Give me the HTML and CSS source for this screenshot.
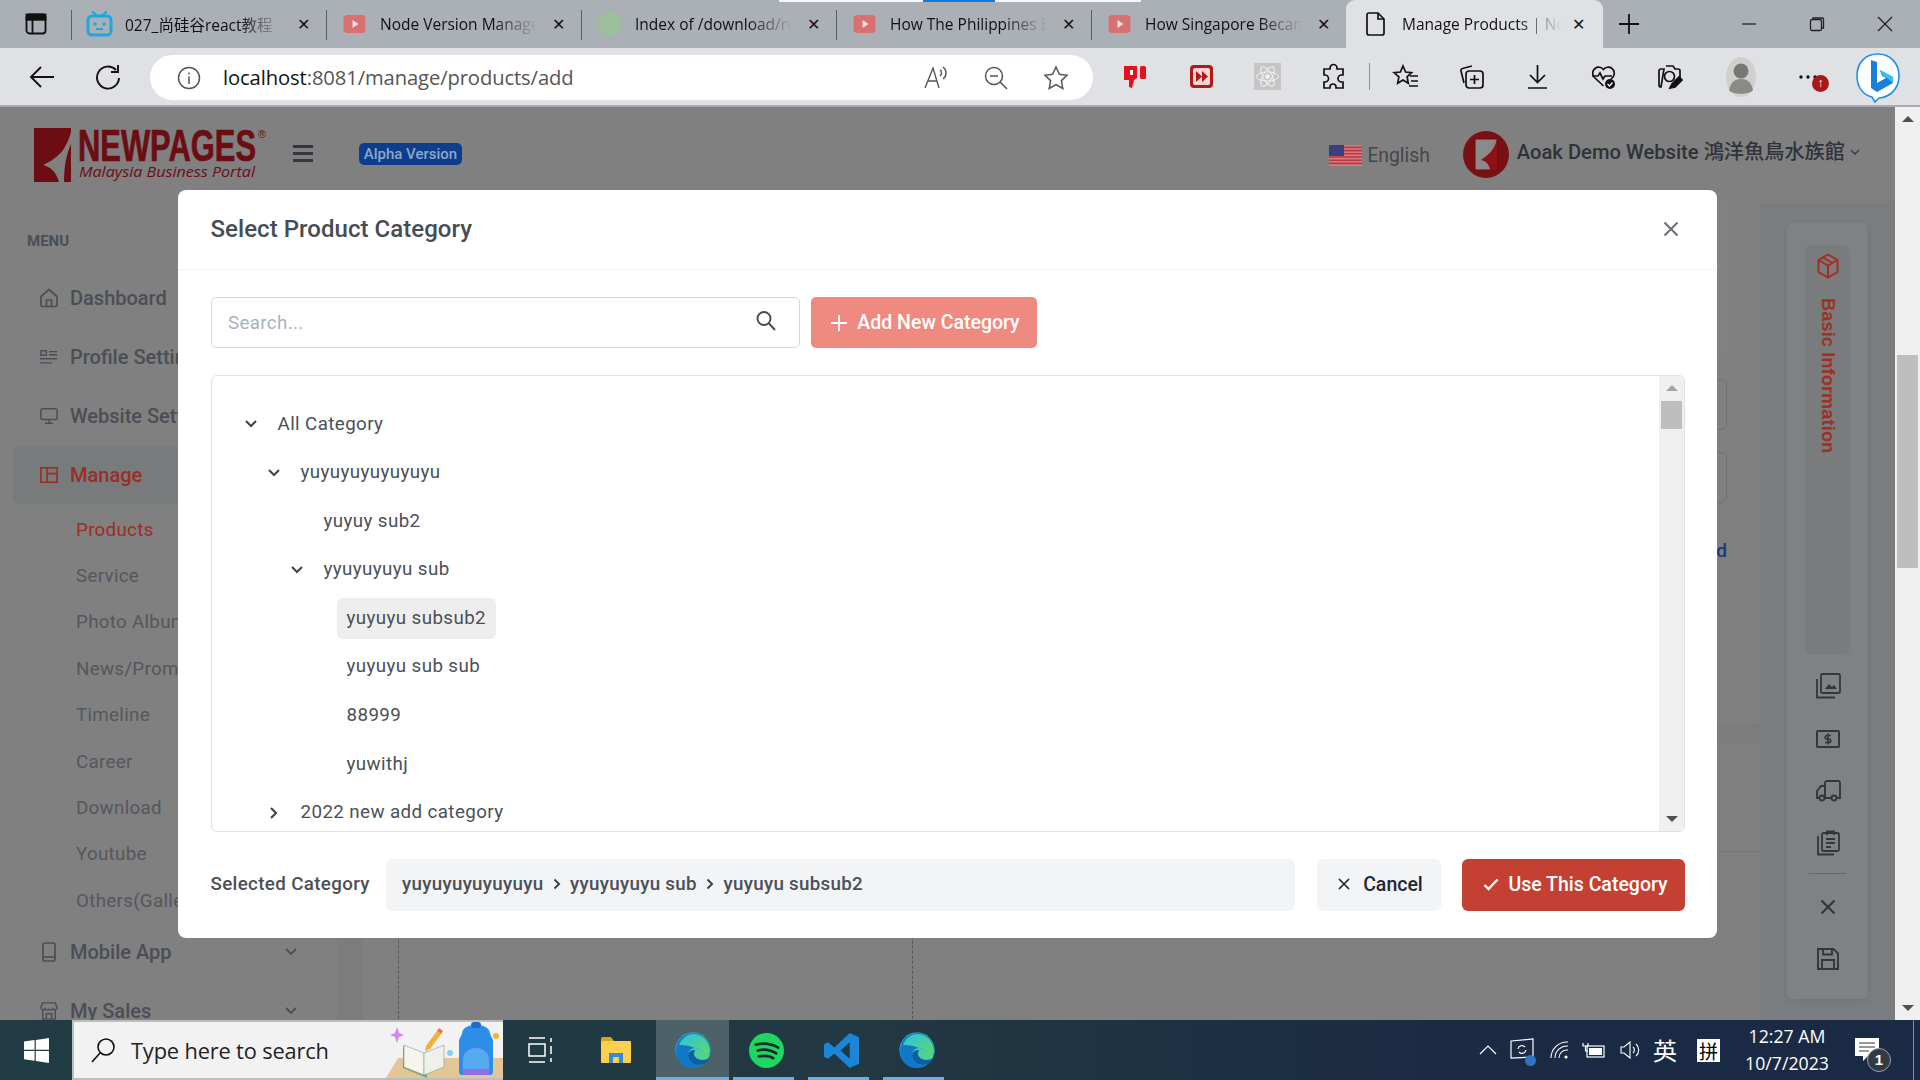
FILE: index.html
```html
<!DOCTYPE html>
<html lang="en">
<head>
<meta charset="utf-8">
<title>Manage Products</title>
<link rel="stylesheet" href="styles.css">
</head>
<body>
<div class="loadbar"><span class="lb-w1"></span><span class="lb-b"></span><span class="lb-w2"></span></div>

<header class="tabstrip">
  <div class="tabs-btn">
    <svg width="24" height="24" viewBox="0 0 24 24" fill="none" stroke="#111" stroke-width="1.8"><rect x="2.5" y="2.5" width="19" height="19" rx="3"/><path d="M2.5 7.5h19M8.5 7.5v14" /><rect x="2.5" y="2.5" width="19" height="5" fill="#111"/></svg>
  </div>
  <div class="tab">
    <svg class="fav" width="27" height="26" viewBox="0 0 27 26"><path d="M7 1l4 4M20 1l-4 4" stroke="#1fa8de" stroke-width="2.4" stroke-linecap="round"/><rect x="2" y="5" width="23" height="19" rx="4" fill="none" stroke="#1fa8de" stroke-width="3"/><circle cx="9" cy="13" r="1.8" fill="#1fa8de"/><circle cx="18" cy="13" r="1.8" fill="#1fa8de"/><path d="M10 18h7" stroke="#1fa8de" stroke-width="2"/></svg>
    <span class="tab-title">027_尚硅谷react教程</span><span class="tab-x">✕</span>
  </div>
  <div class="tab">
    <svg class="fav" width="27" height="24" viewBox="0 0 24 24"><rect x="1" y="3" width="22" height="18" rx="4" fill="#d8706f"/><path d="M10 8l6 4-6 4z" fill="#f4dddd"/></svg>
    <span class="tab-title">Node Version Manager</span><span class="tab-x">✕</span>
  </div>
  <div class="tab">
    <svg class="fav" width="27" height="30" viewBox="0 0 24 26"><path d="M12 1l10 6v12l-10 6L2 19V7z" fill="#9dbf9d"/></svg>
    <span class="tab-title">Index of /download/release</span><span class="tab-x">✕</span>
  </div>
  <div class="tab">
    <svg class="fav" width="27" height="24" viewBox="0 0 24 24"><rect x="1" y="3" width="22" height="18" rx="4" fill="#d8706f"/><path d="M10 8l6 4-6 4z" fill="#f4dddd"/></svg>
    <span class="tab-title">How The Philippines Became</span><span class="tab-x">✕</span>
  </div>
  <div class="tab">
    <svg class="fav" width="27" height="24" viewBox="0 0 24 24"><rect x="1" y="3" width="22" height="18" rx="4" fill="#d8706f"/><path d="M10 8l6 4-6 4z" fill="#f4dddd"/></svg>
    <span class="tab-title">How Singapore Became</span><span class="tab-x">✕</span>
  </div>
  <div class="tab tab-active">
    <svg class="fav" width="24" height="26" viewBox="0 0 24 26" fill="none" stroke="#111" stroke-width="1.7"><path d="M5 2h9l6 6v14a2 2 0 0 1-2 2H5a2 2 0 0 1-2-2V4a2 2 0 0 1 2-2z"/><path d="M14 2v6h6"/></svg>
    <span class="tab-title">Manage Products | Newpages</span><span class="tab-x">✕</span>
  </div>
  <svg class="newtab" width="22" height="22" viewBox="0 0 22 22" stroke="#111" stroke-width="1.8"><path d="M11 1v20M1 11h20"/></svg>
  <div class="winctl">
    <svg width="16" height="16" viewBox="0 0 16 16" stroke="#222" stroke-width="1.3"><path d="M1 8h14"/></svg>
    <svg width="16" height="16" viewBox="0 0 16 16" fill="none" stroke="#222" stroke-width="1.3"><rect x="1.5" y="3.5" width="11" height="11" rx="1.5"/><path d="M4 3.5V2h9.5a1 1 0 0 1 1 1v9H12.5"/></svg>
    <svg width="16" height="16" viewBox="0 0 16 16" stroke="#222" stroke-width="1.3"><path d="M1 1l14 14M15 1L1 15"/></svg>
  </div>
</header>

<nav class="toolbar">
  <svg class="tool-nav" width="26" height="26" viewBox="0 0 26 26" fill="none" stroke="#111" stroke-width="1.9"><path d="M25 13H2M12 3L2 13l10 10"/></svg>
  <svg class="tool-nav" width="26" height="26" viewBox="0 0 26 26" fill="none" stroke="#111" stroke-width="1.9"><path d="M21 6a11 11 0 1 0 3 8"/><path d="M23 1v7h-7"/></svg>
  <div class="addr">
    <svg width="24" height="24" viewBox="0 0 24 24" fill="none" stroke="#555" stroke-width="1.5"><circle cx="12" cy="12" r="10.5"/><path d="M12 10.5V18M12 6.5v2"/></svg>
    <span class="url"><b>localhost</b>:8081/manage/products/add</span>
    <span class="addr-tools">
      <svg width="26" height="26" viewBox="0 0 26 26" fill="none" stroke="#555" stroke-width="1.4"><path d="M2 23L10 3l6 20M5 16h9"/><path d="M17 5c2 1 2 4 0 6M20 2c4 3 4 9 0 12"/></svg>
      <svg width="26" height="26" viewBox="0 0 26 26" fill="none" stroke="#555" stroke-width="1.5"><circle cx="11" cy="11" r="8.5"/><path d="M7 11h8M17 17l7 7"/></svg>
      <svg width="26" height="26" viewBox="0 0 26 26" fill="none" stroke="#555" stroke-width="1.5"><path d="M13 2l3.4 7.2 7.6 1-5.6 5.4 1.4 7.9-6.8-3.8-6.8 3.8 1.4-7.9L2 10.2l7.6-1z"/></svg>
    </span>
  </div>
  <div class="ext">
    <svg width="27" height="27" viewBox="0 0 27 27"><path d="M2 3h13v12l-3 2-2 8-3-1 0-7H2z" fill="#e8101c"/><rect x="18" y="3" width="6" height="13" rx="1.5" fill="#e8101c"/><rect x="8" y="7" width="3" height="5" fill="#fff"/></svg>
    <svg width="27" height="27" viewBox="0 0 27 27"><rect x="2" y="2" width="23" height="23" rx="4" fill="#b01a18"/><rect x="5" y="5" width="17" height="17" rx="2" fill="#f3d5d5"/><path d="M8 8l6 5.5-6 5.500zM14 8l6 5.500-6 5.500z" fill="#b01a18"/></svg>
    <svg width="27" height="27" viewBox="0 0 27 27" fill="none" stroke="#f3f3f3" stroke-width="1"><rect width="27" height="27" fill="#c5c5c5" stroke="none"/><ellipse cx="13.500" cy="13.500" rx="11" ry="4.500"/><ellipse cx="13.500" cy="13.500" rx="11" ry="4.500" transform="rotate(60 13.500 13.500)"/><ellipse cx="13.500" cy="13.500" rx="11" ry="4.500" transform="rotate(120 13.500 13.500)"/><circle cx="13.500" cy="13.500" r="2" fill="#f3f3f3"/></svg>
    <svg width="27" height="27" viewBox="0 0 27 27" fill="none" stroke="#111" stroke-width="1.7"><path d="M10 5a3.500 3.500 0 0 1 7 0v1h6v6h-1.500a3.500 3.500 0 0 0 0 7H23v6h-7v-1a3 3 0 0 0-6 0v1H4v-6h1a3.500 3.500 0 0 0 0-7H4V6h6z"/></svg>
    <span class="ext-sep"></span>
    <svg width="27" height="27" viewBox="0 0 27 27" fill="none" stroke="#111" stroke-width="1.7"><path d="M11 3l2.600 6 6 .7-4.500 4.200 1.200 6.300-5.300-3.200-5.300 3.200 1.200-6.300L2 9.700 8.400 9z"/><path d="M18 13h8M19 18h7M17 23h9"/></svg>
    <svg width="27" height="27" viewBox="0 0 27 27" fill="none" stroke="#111" stroke-width="1.7"><path d="M6 20L3 8a2 2 0 0 1 1.500-2.500L14 3"/><rect x="8" y="8" width="17" height="17" rx="3"/><path d="M16.500 12v9M12 16.500h9"/></svg>
    <svg width="27" height="27" viewBox="0 0 27 27" fill="none" stroke="#111" stroke-width="1.7"><path d="M13.500 2v17M6 12l7.500 7.500L21 12M4 25h19"/></svg>
    <svg width="27" height="27" viewBox="0 0 27 27" fill="none" stroke="#111" stroke-width="1.700"><path d="M13.500 23L4 14a6 6 0 0 1 9.500-7.500A6 6 0 0 1 23 14l-2 2"/><path d="M2 13h6l2-3 3 6 2-3h7"/><circle cx="20" cy="21" r="5" fill="#111" stroke="none"/><path d="M17.500 21l2 2 3-3.500" stroke="#fff" stroke-width="1.200"/></svg>
    <svg class="ext-cam" width="27" height="27" viewBox="0 0 27 27" fill="none" stroke="#111" stroke-width="1.700"><path d="M10 3h7l2 3h3a2 2 0 0 1 2 2v8M5 24a2 2 0 0 1-2-2V8a2 2 0 0 1 2-2h3z"/><circle cx="13.500" cy="13.500" r="5"/><path d="M14 25l2-4 7-7 3 3-7 7z" fill="#111"/></svg>
    <svg class="ext-user" width="30" height="40" viewBox="0 0 30 40"><ellipse cx="15" cy="20" rx="15" ry="20" fill="#d0cfcb"/><circle cx="15" cy="14" r="7.500" fill="#777"/><path d="M3 33c2-9 7-11 12-11s10 2 12 11c-3 5-21 5-24 0z" fill="#8a8a86"/></svg>
    <span class="more">
      <svg width="22" height="8" viewBox="0 0 22 8" fill="#111"><circle cx="3" cy="4" r="1.700"/><circle cx="10" cy="4" r="1.700"/><circle cx="17" cy="4" r="1.700"/></svg>
      <span class="more-badge">↑</span>
    </span>
    <svg class="bing" width="46" height="52" viewBox="0 0 46 52"><path d="M23 3C10 3 2 12 2 25c0 11 6 19 15 21l3 5 4-4c12-1 20-10 20-22C44 12 35 3 23 3z" fill="#fff" stroke="#1f8fe6" stroke-width="1.600"/><path d="M16 9l6 2v21l9-5-4-2-2-6 13 7v6l-16 9-6-4z" fill="#1b7fd8"/><path d="M25 19l13 7v6l-6-5-4-2z" fill="#35c3ea"/></svg>
  </div>
</nav>
<div class="chrome-line"></div>

<main class="page">
  <div class="app">
    <div class="topbar">
      <svg class="logo" width="232" height="56" viewBox="0 0 232 56">
        <path d="M0 1h37v4c-5 17-11 25-28 33 7 2 13 6 16 17H0z" fill="#6b0d12"/>
        <path d="M37 17v38h-7c0-15 2-27 7-38z" fill="#6b0d12"/>
        <text x="44" y="34" class="logo-main" textLength="178" lengthAdjust="spacingAndGlyphs">NEWPAGES</text>
        <text x="224" y="11" class="logo-reg">®</text>
        <text x="45" y="50" class="logo-sub" textLength="176" lengthAdjust="spacingAndGlyphs">Malaysia Business Portal</text>
      </svg>
      <span class="burger"><i></i><i></i><i></i></span>
      <span class="alpha">Alpha Version</span>
      <div class="topright">
        <svg class="flag" width="33" height="21" viewBox="0 0 33 21"><rect width="33" height="21" fill="#d97a80"/><path d="M0 2.400h33M0 5.600h33M0 8.800h33M0 12h33M0 15.200h33M0 18.400h33" stroke="#b63a44" stroke-width="1.600"/><rect width="15" height="11" fill="#3a3f80"/></svg>
        <span class="lang">English</span>
        <svg class="avatar" width="46" height="47" viewBox="0 0 46 47"><ellipse cx="23" cy="23.500" rx="23" ry="23.500" fill="#7a0f14"/><rect x="12" y="8" width="22" height="31" fill="#8a8a8a" stroke="#6a0c10"/><path d="M34 9c-3 9-7 14-16 20 4 1 8 3 9 10h7z" fill="#8d1116"/></svg>
        <span class="site">Aoak Demo Website 鴻洋魚鳥水族館</span>
        <svg width="10" height="7" viewBox="0 0 10 7" fill="none" stroke="#3a3d45" stroke-width="1.500"><path d="M1 1l4 4 4-4"/></svg>
      </div>
    </div>

    <div class="workspace">
      <aside class="sidebar">
        <div class="menu-label">MENU</div>
        <a class="side-item">
          <svg width="18" height="20" viewBox="0 0 18 20" fill="none" stroke="currentColor" stroke-width="1.700"><path d="M1 8.500L9 1.500l8 7V17a1.500 1.500 0 0 1-1.500 1.500h-13A1.500 1.500 0 0 1 1 17z"/><path d="M6.500 18.500V12h5v6.500"/></svg>
          Dashboard</a>
        <a class="side-item">
          <svg width="20" height="16" viewBox="0 0 20 16" fill="none" stroke="currentColor" stroke-width="1.600"><rect x="1" y="1" width="6" height="5"/><path d="M10 2h9M10 5.500h9M0 10h19M0 14.500h13"/></svg>
          Profile Settings</a>
        <a class="side-item">
          <svg width="20" height="18" viewBox="0 0 20 18" fill="none" stroke="currentColor" stroke-width="1.700"><rect x="1" y="1" width="18" height="12" rx="2"/><path d="M10 13v4M5.500 17h9"/></svg>
          Website Settings</a>
        <a class="side-item side-active">
          <svg width="20" height="18" viewBox="0 0 20 18" fill="none" stroke="currentColor" stroke-width="1.800"><rect x="1" y="1" width="18" height="16"/><path d="M8 1v16M8 7.500h11"/></svg>
          Manage</a>
        <a class="side-sub side-sub-active">Products</a>
        <a class="side-sub">Service</a>
        <a class="side-sub">Photo Album</a>
        <a class="side-sub">News/Promotion</a>
        <a class="side-sub">Timeline</a>
        <a class="side-sub">Career</a>
        <a class="side-sub">Download</a>
        <a class="side-sub">Youtube</a>
        <a class="side-sub">Others(Gallery)</a>
        <a class="side-item">
          <svg width="18" height="20" viewBox="0 0 18 20" fill="none" stroke="currentColor" stroke-width="1.700"><rect x="3" y="1" width="12" height="18" rx="2"/><path d="M3 15h12"/></svg>
          Mobile App
          <svg class="side-caret" width="12" height="8" viewBox="0 0 12 8" fill="none" stroke="currentColor" stroke-width="1.800"><path d="M1 1l5 5 5-5"/></svg></a>
        <a class="side-item">
          <svg width="20" height="20" viewBox="0 0 20 20" fill="none" stroke="currentColor" stroke-width="1.600"><path d="M3 1h14l2 5a2.500 2.500 0 0 1-4.500 1.500A3 3 0 0 1 10 8a3 3 0 0 1-4.500-.500A2.500 2.500 0 0 1 1 6zM3 9v10h14V9M7 19v-6h6v6"/></svg>
          My Sales
          <svg class="side-caret" width="12" height="8" viewBox="0 0 12 8" fill="none" stroke="currentColor" stroke-width="1.800"><path d="M1 1l5 5 5-5"/></svg></a>
      </aside>

      <section class="main">
        <div class="cards">
          <div class="card card-form">
            <div class="panel"></div>
            <div class="ghost-input"></div>
            <div class="ghost-input"></div>
            <div class="ghost-link">Add</div>
          </div>
          <div class="card card-media">
            <div class="card-head"></div>
            <div class="dash-box"></div>
          </div>
        </div>
        <aside class="rail">
          <div class="rail-active">
            <svg width="22" height="26" viewBox="0 0 22 26" fill="none" stroke="#a03024" stroke-width="2"><path d="M11 1.500l9.500 5.500v12L11 24.500 1.500 19V7z"/><path d="M1.500 7L11 12.500 20.500 7M11 12.500v12M6 4.500l9.500 5.500"/></svg>
            <span class="rail-text">Basic Information</span>
          </div>
          <div class="rail-icons">
            <svg width="26" height="26" viewBox="0 0 26 26" fill="none" stroke="#33363b" stroke-width="1.800"><rect x="6" y="1" width="19" height="19" rx="1.500"/><path d="M2 6v18.500h18"/><path d="M10 16l4-5 3 3 2-2 3 4z" fill="#33363b" stroke="none"/></svg>
            <svg width="24" height="20" viewBox="0 0 24 20" fill="none" stroke="#33363b" stroke-width="2"><rect x="1" y="2" width="22" height="16" rx="1"/><path d="M15 6.500h-4a1.500 1.500 0 0 0 0 3.500h2a1.500 1.500 0 0 1 0 3.500H9M12 4.500v11" stroke-width="1.700"/></svg>
            <svg width="26" height="22" viewBox="0 0 26 22" fill="none" stroke="#33363b" stroke-width="1.900"><path d="M10 18V3a2 2 0 0 1 2-2h11a2 2 0 0 1 2 2v15h-3M16 18h-6"/><path d="M10 6H6l-4 5v7h2.500"/><circle cx="7" cy="18" r="2.500"/><circle cx="19" cy="18" r="2.500"/></svg>
            <svg width="24" height="26" viewBox="0 0 24 26" fill="none" stroke="#33363b" stroke-width="1.800"><path d="M2 6v18.500h16"/><rect x="6" y="3" width="17" height="18" rx="1.500"/><path d="M11 5V1.500h7V5M10 9h9M10 13h9M10 17h5"/></svg>
            <span class="rail-sep"></span>
            <svg width="16" height="16" viewBox="0 0 16 16" stroke="#33363b" stroke-width="2.200"><path d="M1.500 1.500l13 13M14.500 1.500l-13 13"/></svg>
            <svg width="22" height="22" viewBox="0 0 22 22" fill="none" stroke="#33363b" stroke-width="1.900"><path d="M1 1h15.500L21 5.500V21H1z"/><path d="M6 1v5.500h9V1M5 21v-9h12v9"/></svg>
          </div>
        </aside>
      </section>
    </div>
  </div>

  <div class="pagebar">
    <span class="sb-up"></span>
    <span class="pagebar-thumb"></span>
    <span class="sb-down"></span>
  </div>

  <div class="modal-layer">
    <div class="modal">
      <div class="modal-head">
        <h2>Select Product Category</h2>
        <svg width="16" height="16" viewBox="0 0 16 16" stroke="#6f747b" stroke-width="2.200"><path d="M1.500 1.500l13 13M14.500 1.500l-13 13"/></svg>
      </div>
      <div class="modal-body">
        <div class="search-row">
          <div class="search">
            <span>Search...</span>
            <svg width="22" height="22" viewBox="0 0 22 22" fill="none" stroke="#454b54" stroke-width="1.900"><circle cx="9" cy="8.500" r="6.500"/><path d="M14 13.500l6 6.500"/></svg>
          </div>
          <button class="btn-add">
            <svg width="16" height="16" viewBox="0 0 16 16" stroke="#fff" stroke-width="2"><path d="M8 0v16M0 8h16"/></svg>
            Add New Category</button>
        </div>
        <div class="tree">
          <ul class="tree-list">
            <li class="node lv0"><svg class="tw" width="14" height="10" viewBox="0 0 14 10" fill="none" stroke="#414852" stroke-width="2.200"><path d="M2 2l5 5 5-5"/></svg><span>All Category</span></li>
            <li class="node lv1"><svg class="tw" width="14" height="10" viewBox="0 0 14 10" fill="none" stroke="#414852" stroke-width="2.200"><path d="M2 2l5 5 5-5"/></svg><span>yuyuyuyuyuyuyu</span></li>
            <li class="node lv2 leaf"><span>yuyuy sub2</span></li>
            <li class="node lv2"><svg class="tw" width="14" height="10" viewBox="0 0 14 10" fill="none" stroke="#414852" stroke-width="2.200"><path d="M2 2l5 5 5-5"/></svg><span>yyuyuyuyu sub</span></li>
            <li class="node lv3 leaf sel"><span>yuyuyu subsub2</span></li>
            <li class="node lv3 leaf"><span>yuyuyu sub sub</span></li>
            <li class="node lv3 leaf"><span>88999</span></li>
            <li class="node lv3 leaf"><span>yuwithj</span></li>
            <li class="node lv1"><svg class="tw" width="14" height="14" viewBox="0 0 10 14" fill="none" stroke="#414852" stroke-width="2.200"><path d="M2 2l5 5-5 5"/></svg><span>2022 new add category</span></li>
          </ul>
          <div class="tree-bar">
            <span class="sb-up sb-light"></span>
            <span class="tree-thumb"></span>
            <span class="sb-down"></span>
          </div>
        </div>
        <div class="foot">
          <label>Selected Category</label>
          <div class="crumbs">
            <span>yuyuyuyuyuyuyu</span>
            <svg width="8" height="12" viewBox="0 0 8 12" fill="none" stroke="#3c434d" stroke-width="2"><path d="M1.500 1.500L6 6l-4.500 4.500"/></svg>
            <span>yyuyuyuyu sub</span>
            <svg width="8" height="12" viewBox="0 0 8 12" fill="none" stroke="#3c434d" stroke-width="2"><path d="M1.500 1.500L6 6l-4.500 4.500"/></svg>
            <span>yuyuyu subsub2</span>
          </div>
          <button class="btn-cancel">
            <svg width="12" height="12" viewBox="0 0 12 12" stroke="#1f2937" stroke-width="1.700"><path d="M1 1l10 10M11 1L1 11"/></svg>
            Cancel</button>
          <button class="btn-use">
            <svg width="16" height="13" viewBox="0 0 16 13" fill="none" stroke="#fff" stroke-width="2.300"><path d="M1.500 7l4 4L14.500 1.500"/></svg>
            Use This Category</button>
        </div>
      </div>
    </div>
  </div>
</main>

<footer class="taskbar">
  <div class="start">
    <svg width="25" height="25" viewBox="0 0 25 25" fill="#fff"><path d="M0 3.600l10.600-1.500v9.700H0zM11.800 2L25 0v11.800H11.800zM0 13h10.600v9.800L0 21.300zM11.800 13H25v12l-13.200-1.900z"/></svg>
  </div>
  <div class="searchbox">
    <svg width="26" height="26" viewBox="0 0 26 26" fill="none" stroke="#111" stroke-width="1.600"><circle cx="16" cy="10" r="8"/><path d="M10 16L2 25"/></svg>
    <span>Type here to search</span>
    <svg class="promo" width="120" height="56" viewBox="0 0 120 56">
      <path d="M3 56l12-20h105v20z" fill="#e2c698"/>
      <path d="M20 24l21 8 3-3v27l-24-10z" fill="#6fae6e"/>
      <path d="M21 23l20 8v22l-20-8z" fill="#f6f4ec" stroke="#8a9aa0" stroke-width=".6"/>
      <path d="M41 31l20-8v22l-20 8z" fill="#eef0e9" stroke="#8a9aa0" stroke-width=".6"/>
      <path d="M43 24l11-15 4 3-11 15-5 2z" fill="#f0b03a"/><path d="M54 9l2-3 4 3-2 3z" fill="#ec6f4f"/>
      <path d="M79 12c0-6 6-9 14-9s14 3 14 9l3 6v32a3 3 0 0 1-3 3H79a3 3 0 0 1-3-3V18z" fill="#2d8de9"/>
      <rect x="88" y="0" width="10" height="6" rx="3" fill="#1c6cc7"/>
      <path d="M80 53V38a13 12 0 0 1 26 0v15z" fill="#8f6fe8"/><path d="M80 47V38a13 12 0 0 1 26 0v9z" fill="#57a9f0"/>
      <path d="M14 5l2 6 5 2-5 2-2 6-2-6-5-2 5-2z" fill="#d685f0"/>
      <circle cx="67" cy="31" r="3" fill="#7fd6e8"/><circle cx="113" cy="14" r="3" fill="#f3b324"/>
    </svg>
  </div>
  <div class="task-icons">
    <div class="task t-view"><svg width="24" height="26" viewBox="0 0 24 26" fill="none" stroke="#fff" stroke-width="1.500"><path d="M1 1h16M1 25h16M1 7h16v12H1zM23 1v4M23 9v8M23 21v4"/></svg></div>
    <div class="task t-files"><svg width="32" height="28" viewBox="0 0 32 28"><path d="M1 3a2 2 0 0 1 2-2h8l3 4H1z" fill="#d9a21e"/><rect x="1" y="5" width="30" height="22" rx="1" fill="#fcd04d"/><path d="M9 27V17h14v10h-4v-6h-6v6z" fill="#2f8fd6"/></svg></div>
    <div class="task t-edge t-on"><svg width="36" height="36" viewBox="0 0 36 36"><use href="#edge"/></svg></div>
    <div class="task t-spotify t-on2"><svg width="35" height="35" viewBox="0 0 36 36"><circle cx="18" cy="18" r="18" fill="#1ed760"/><path d="M7 12c8-2 16-1 23 3M9 18c7-2 13-1 19 3M10 24c6-1 11-1 15 2" fill="none" stroke="#1a2b2d" stroke-width="2.700" stroke-linecap="round"/></svg></div>
    <div class="task t-code t-on3"><svg width="37" height="37" viewBox="0 0 36 36"><path d="M26 1l9 4v26l-9 4L11 21l-6 5-4-2V12l4-2 6 5zM26 10l-9 8 9 8z" fill="#1b86d8"/></svg></div>
    <div class="task t-edge2 t-on4"><svg width="36" height="36" viewBox="0 0 36 36"><use href="#edge"/></svg></div>
  </div>
  <div class="tray">
    <svg class="tr-up" width="18" height="10" viewBox="0 0 18 10" fill="none" stroke="#fff" stroke-width="1.200"><path d="M1 9l8-8 8 8"/></svg>
    <span class="tr-mon"><svg width="24" height="24" viewBox="0 0 24 24" fill="none" stroke="#fff" stroke-width="1.200"><path d="M1 3l22-2v18l-22 1zM8 11a4 4 0 0 1 7-2M16 12a4 4 0 0 1-7 2"/></svg><i></i></span>
    <svg class="tr-wifi" width="20" height="18" viewBox="0 0 20 18" fill="none" stroke="#fff" stroke-width="1.100"><path d="M1 17A16 16 0 0 1 18 1M5 17A12 12 0 0 1 18 5M9 17a8 8 0 0 1 9-8"/><circle cx="16" cy="16" r="1.600" fill="#fff" stroke="none"/></svg>
    <svg class="tr-batt" width="24" height="16" viewBox="0 0 24 16" fill="none" stroke="#fff" stroke-width="1.200"><rect x="5" y="4" width="17" height="11"/><rect x="7" y="6" width="13" height="7" fill="#fff" stroke="none"/><path d="M1 1v3h5V1M3.500 4v5H6"/></svg>
    <svg class="tr-vol" width="22" height="20" viewBox="0 0 22 20" fill="none" stroke="#fff" stroke-width="1.100"><path d="M1 7h3l6-5v16l-6-5H1zM13 7a4 4 0 0 1 0 6M16 4a8 8 0 0 1 0 12"/></svg>
    <span class="tr-ime">英</span>
    <span class="tr-pin">拼</span>
    <div class="clock"><span>12:27 AM</span><span>10/7/2023</span></div>
    <span class="tr-note">
      <svg width="24" height="24" viewBox="0 0 24 24"><path d="M0 0h24v18H13l-5 5v-5H0z" fill="#fff"/><path d="M4 5h16M4 9h16M4 13h10" stroke="#333" stroke-width="1"/></svg>
      <b>1</b>
    </span>
    <span class="tr-edge"></span>
  </div>
</footer>

<svg class="defs" width="0" height="0" aria-hidden="true">
  <defs>
    <linearGradient id="eg" x1="0" y1="0" x2="1" y2="1"><stop offset="0" stop-color="#2bc2e0"/><stop offset="1" stop-color="#5fd86f"/></linearGradient>
    <g id="edge">
      <circle cx="18" cy="18" r="17.500" fill="url(#eg)"/>
      <path d="M1 19C1 30 9 36 18 36c5 0 9-2 11-4-8 3-16-1-16-9 0-4 3-7 7-7 5 0 8 3 8 6h8C36 9 28 1 18 1 8 1 1 9 1 19z" fill="#0f78c9"/>
      <path d="M13 23c0 8 8 12 16 9 3-2 5-4 6-7-3 3-8 4-12 2-4-2-5-5-3-9-4 0-7 2-7 5z" fill="#0c5fa8"/>
      <path d="M4 13C7 6 12 2 18 2c10 0 17 8 17 18 0 2-2 2-7 2 0-3-3-6-8-6-7-3-12-3-16-3z" fill="url(#eg)"/>
    </g>
  </defs>
</svg>
</body>
</html>
```

FILE: styles.css
```css
* { box-sizing: border-box; }
html, body { margin: 0; height: 100%; }
body {
  width: 1920px; height: 1080px; overflow: hidden;
  display: flex; flex-direction: column;
  font-family: Roboto, "Noto Sans CJK TC", sans-serif;
  background: #808080;
}
.defs { position: absolute; }
button { font-family: inherit; border: 0; cursor: pointer; }

/* browser chrome */
.loadbar { position: absolute; top: 0; left: 779px; display: flex; height: 2px; z-index: 3; }
.lb-w1 { width: 144px; background: #f6f6f6; }
.lb-b { width: 72px; background: #1279d6; }
.lb-w2 { width: 146px; background: #f6f6f6; }

.tabstrip { height: 48px; flex: none; background: #abafb6; display: flex; align-items: stretch; font-family: "Open Sans", "Noto Sans CJK SC", sans-serif; }
.tabs-btn { width: 71px; display: flex; align-items: center; padding-left: 24px; }
.tab { width: 255px; display: flex; align-items: center; position: relative; padding-left: 15px; font-size: 15.5px; color: #111; }
.tab::before { content: ""; position: absolute; left: 0; top: 10px; bottom: 8px; width: 1px; background: #5b5e63; }
.tab-title { margin-left: 12px; width: 157px; white-space: nowrap; overflow: hidden; -webkit-mask-image: linear-gradient(90deg, #000 72%, transparent 100%); mask-image: linear-gradient(90deg, #000 72%, transparent 100%); }
.tab-x { margin-left: 15px; font-size: 16px; color: #111; font-family: "DejaVu Sans", sans-serif; }
.tab-active { width: 257px; background: #dfe1e5; border-radius: 9px 9px 0 0; padding-left: 18px; }
.tab-active::before { display: none; }
.tab-active .tab-title { margin-left: 14px; width: 160px; }
.tab-active .tab-x { margin-left: 10px; }
.newtab { align-self: center; margin-left: 15px; }
.winctl { margin-left: auto; display: flex; align-items: center; gap: 52px; padding-right: 27px; }

.toolbar { height: 57px; flex: none; background: #dfe1e5; display: flex; align-items: center; position: relative; padding-left: 29px; }
.tool-nav { margin-right: 40px; }
.tool-nav + .tool-nav { margin-right: 29px; }
.addr { width: 943px; height: 45px; margin-top: 2px; border-radius: 23px; background: #fff; display: flex; align-items: center; padding-left: 27px; }
.url { margin-left: 22px; margin-top: -2px; font-family: "Open Sans", sans-serif; font-size: 20.200px; color: #555; letter-spacing: -.1px; }
.url b { font-weight: 400; color: #111; }
.addr-tools { margin-left: auto; display: flex; gap: 34px; padding-right: 24px; align-items: center; }
.ext { flex: 1; display: flex; align-items: center; padding-left: 29px; position: relative; }
.ext > svg { margin-right: 39px; flex: none; }
.ext-sep { width: 1px; height: 27px; background: #8b8d91; margin: 0 22px 0 -17px; }
.ext > svg.ext-cam { margin-right: 43px; }
.ext > svg.ext-user { margin-right: 42px; }
.more { display: inline-flex; position: relative; width: 30px; margin-right: 27px; margin-left: 0; }
.more-badge { position: absolute; left: 14px; top: 2px; width: 17px; height: 17px; border-radius: 50%; background: #a81a1a; color: #fff; font: 700 12px/17px "Liberation Sans", sans-serif; text-align: center; }
.ext > svg.bing { margin-right: 0; }
.chrome-line { height: 2px; flex: none; background: #aaaab4; }

/* dimmed app behind the dialog */
.page { flex: 1; min-height: 0; display: flex; position: relative; overflow: hidden; }
.app { flex: 1; min-width: 0; display: flex; flex-direction: column; }
.topbar { height: 94px; flex: none; background: #808080; display: flex; align-items: center; padding-left: 34px; position: relative; z-index: 1; }
.logo { flex: none; margin-top: 2px; }
.logo-main { font: 700 44.700px "Liberation Sans Narrow", "Liberation Sans", sans-serif; fill: #6b0d12; stroke: #6b0d12; stroke-width: .7px; }
.logo-reg { font: 400 11px "Liberation Sans", sans-serif; fill: #6b0d12; }
.logo-sub { font: italic 400 15px "Open Sans", sans-serif; fill: #6b0d12; }
.burger { width: 20px; margin-left: 27px; display: flex; flex-direction: column; gap: 4px; margin-top: -1px; }
.burger i { height: 3px; background: #34373d; display: block; }
.alpha { margin-left: 46px; margin-top: -1px; height: 22px; width: 103px; border-radius: 5px; background: #0d3e8c; color: #8ea6cb; font-size: 15px; font-weight: 500; display: flex; align-items: center; justify-content: center; white-space: nowrap; }
.topright { margin-left: auto; padding-right: 35px; display: flex; align-items: center; }
.flag { margin-top: 3px; }
.lang { margin-left: 5px; font-size: 19.300px; color: #44474d; margin-top: 3px; }
.avatar { margin-left: 33px; }
.site { margin-left: 8px; font-size: 20.200px; font-weight: 500; color: #2f323a; margin-right: 5px; margin-top: -7px; white-space: nowrap; }
.topright > svg:last-child { margin-top: -3px; }

.workspace { flex: 1; min-height: 0; display: flex; }
.sidebar { width: 337px; flex: none; background: #808080; padding: 30px 13px 0; color: #4a4e56; overflow: hidden; }
.menu-label { height: 20px; margin: 0 0 18px 14px; font-size: 15px; font-weight: 700; line-height: 20px; }
.side-item { height: 58px; margin-bottom: 1px; padding-left: 27px; display: flex; align-items: center; gap: 12px; font-size: 20px; font-weight: 500; white-space: nowrap; }
.side-item > svg:first-child { width: 18px; flex: none; overflow: visible; }
.side-active { color: #9c2e24; background: #777b7c; border-radius: 6px; margin-bottom: 2.500px; }
.side-sub { height: 46.400px; padding-left: 63px; display: flex; align-items: center; font-size: 18.750px; letter-spacing: .3px; color: #54575e; }
.side-sub + .side-item { margin-top: -1px; }
.side-sub-active { color: #9c2e24; }
.side-caret { margin-left: auto; margin-right: 27px; }

.main { flex: 1; min-width: 0; background: #7b7c7e; display: flex; padding-left: 26px; overflow: hidden; }
.cards { width: 1397px; flex: none; display: flex; flex-direction: column; gap: 21px; }
.card { background: #808080; border-radius: 0 0 6px 6px; flex: none; }
.card-form { height: 522px; padding-right: 33px; display: flex; flex-direction: column; align-items: flex-end; }
.panel { width: 100%; height: 156px; background: #828282; border-radius: 0 0 6px 0; }
.ghost-input { width: 200px; height: 51px; margin-top: 22px; border: 1px solid #6f6f6f; border-radius: 6px; }
.ghost-link { margin-top: 37px; font-size: 19px; font-weight: 500; color: #1c3a78; line-height: 22px; }
.card-media { border-radius: 6px; height: 400px; }
.card-head { height: 108px; border-bottom: 1px solid #787878; }
.dash-box { width: 515px; height: 260px; margin: 28px 0 0 35px; border: 1px dashed #555; }

.rail { width: 81px; height: 776px; margin: 22px 0 0 27px; flex: none; border-radius: 6px; background: #808183; box-shadow: 0 2px 6px rgba(0,0,0,.08); display: flex; flex-direction: column; align-items: center; padding-top: 22px; }
.rail-active { width: 45px; height: 410px; flex: none; border-radius: 8px; background: #7a7b7d; display: flex; flex-direction: column; align-items: center; padding-top: 8px; gap: 19px; }
.rail-text { writing-mode: vertical-rl; font: 700 18.200px "Liberation Sans", sans-serif; color: #a03024; white-space: nowrap; letter-spacing: .1px; }
.rail-icons { display: flex; flex-direction: column; align-items: center; margin-top: 18px; }
.rail-icons svg { margin-bottom: 30px; flex: none; }
.rail-icons svg:nth-child(2) { margin-bottom: 31px; }
.rail-icons svg:nth-child(3) { margin-bottom: 28px; }
.rail-icons svg:nth-child(4) { margin-bottom: 17px; }
.rail-icons svg:nth-child(6) { margin-bottom: 33px; }
.rail-sep { width: 37px; height: 1px; background: #66686b; margin-bottom: 25px; }

.pagebar { width: 25px; flex: none; background: #f0f0f0; position: relative; display: flex; flex-direction: column; align-items: center; }
.pagebar-thumb { position: absolute; top: 248px; left: 2px; width: 21px; height: 213px; background: #bebebe; }
.sb-up, .sb-down { width: 0; height: 0; border-left: 6px solid transparent; border-right: 6px solid transparent; flex: none; }
.sb-up { border-bottom: 6px solid #505050; margin-top: 9px; }
.sb-down { border-top: 6px solid #505050; position: absolute; bottom: 9px; }
.sb-light { border-bottom-color: #a3a3a3; }

/* dialog */
.modal-layer { position: absolute; inset: 0; z-index: 2; padding: 83px 0 0 178px; pointer-events: none; }
.modal { width: 1539px; height: 748px; background: #fff; border-radius: 8px; display: flex; flex-direction: column; pointer-events: auto; }
.modal-head { height: 80px; flex: none; border-bottom: 1px solid #f2f3f4; display: flex; align-items: center; justify-content: space-between; padding: 0 38px 0 32.500px; }
.modal-head h2 { margin: 0; font-size: 24px; font-weight: 500; color: #454c56; margin-top: -2px; letter-spacing: .05px; }
.modal-head svg { margin-top: -1px; }
.modal-body { flex: 1; min-height: 0; padding: 27px 32px 27px 32.500px; display: flex; flex-direction: column; gap: 27px; }
.search-row { height: 51px; flex: none; display: flex; gap: 11px; }
.search { width: 589.500px; border: 1px solid #d3d6db; border-radius: 5px; display: flex; align-items: center; justify-content: space-between; padding: 0 22px 0 16.500px; font-size: 18.750px; letter-spacing: .35px; color: #a9b1bd; }
.search svg { margin-top: -3px; }
.btn-add { width: 226px; padding-left: 9px; background: #ef8a80; border-radius: 5px; color: #fff; font-size: 19.500px; font-weight: 500; display: flex; align-items: center; justify-content: center; gap: 10px; white-space: nowrap; }
.tree { flex: 1; min-height: 0; border: 1px solid #dfe1e4; border-radius: 6px; display: flex; overflow: hidden; }
.tree-list { flex: 1; list-style: none; margin: 0; padding: 27.500px 0 0; overflow: hidden; font-size: 18.750px; letter-spacing: .4px; color: #4b5058; }
.node { height: 41px; margin-bottom: 7.600px; display: flex; align-items: center; }
.node span { padding: 0 10px; height: 41px; line-height: 41px; border-radius: 6px; white-space: nowrap; }
.lv0 { padding-left: 27.500px; }
.lv1 { padding-left: 50.500px; }
.lv2 { padding-left: 73.500px; }
.lv3 { padding-left: 96.500px; }
.node .tw { flex: none; margin: 0 9.500px 0 5px; }
.leaf { margin-left: 28.500px; }
.sel span { background: #eeeeee; }
.tree-bar { width: 25px; flex: none; background: #f0f0f0; position: relative; display: flex; flex-direction: column; align-items: center; }
.tree-thumb { position: absolute; top: 25px; left: 2px; width: 21px; height: 28px; background: #bebebe; }
.foot { height: 52px; flex: none; display: flex; align-items: center; }
.foot label { width: 175.500px; font-size: 18.750px; font-weight: 500; letter-spacing: .35px; color: #4a5058; margin-top: -2px; white-space: nowrap; }
.crumbs { width: 909px; height: 52px; background: #f3f4f6; border-radius: 6px; display: flex; align-items: center; gap: 9.300px; padding: 0 0 2px 16px; font-size: 18.750px; font-weight: 500; letter-spacing: .3px; color: #4b5058; white-space: nowrap; }
.btn-cancel { width: 124px; height: 52px; margin-left: 22px; padding: 0 0 2px 3px; background: #f3f4f6; border-radius: 6px; color: #1f2937; font-size: 19.500px; font-weight: 500; display: flex; align-items: center; justify-content: center; gap: 13px; }
.btn-use { width: 223px; height: 52px; margin-left: 21px; padding: 0 0 2px 4px; background: #c44033; border-radius: 6px; color: #fff; font-size: 19.500px; font-weight: 500; display: flex; align-items: center; justify-content: center; gap: 9px; white-space: nowrap; }

/* windows taskbar */
.taskbar { height: 60px; flex: none; display: flex; align-items: stretch; background: linear-gradient(90deg, #213c45 0%, #223842 45%, #1b2b44 75%, #1a2a44 100%); }
.start { width: 72px; display: flex; align-items: center; justify-content: center; }
.searchbox { width: 431px; background: #f2f2f2; border: 2px solid #bdbdbd; border-width: 2px 0 2px 2px; display: flex; align-items: center; padding-left: 16px; position: relative; font-family: "Open Sans", sans-serif; font-size: 21.800px; color: #222; }
.searchbox span { margin-left: 15px; letter-spacing: -.15px; }
.promo { margin-left: auto; flex: none; }
.task-icons { display: flex; height: 60px; }
.task { height: 60px; display: flex; align-items: center; justify-content: center; position: relative; }
.t-view { width: 73px; }
.t-files { width: 80px; }
.t-edge { width: 73px; background: #4d6168; }
.t-spotify, .t-code, .t-edge2 { width: 75px; }
.t-on::after, .t-on2::after, .t-on3::after, .t-on4::after { content: ""; position: absolute; bottom: 0; height: 3px; background: #6cb0e0; }
.t-on::after { left: 0; right: 0; }
.t-on2::after, .t-on3::after, .t-on4::after { left: 4px; right: 10px; }
.tray { flex: 1; display: flex; align-items: center; position: relative; color: #fff; padding-left: 525px; }
.tr-mon { position: relative; display: inline-flex; margin-left: 13px; }
.tr-mon i { position: absolute; right: -2px; bottom: -4px; width: 11px; height: 11px; border-radius: 50%; background: #2f74c0; }
.tr-wifi { margin-left: 16px; }
.tr-batt { margin-left: 12px; }
.tr-vol { margin-left: 14px; }
.tr-ime { margin-left: 11px; font-size: 24px; font-family: "Noto Sans CJK TC", sans-serif; line-height: 1; }
.tr-pin { margin-left: 20px; width: 23px; height: 23px; background: #fff; color: #000; font: 400 19px/23px "Noto Sans CJK TC", sans-serif; text-align: center; }
.clock { width: 110px; margin-left: 12px; display: flex; flex-direction: column; align-items: center; font-family: "Open Sans", sans-serif; font-size: 17.700px; line-height: 27px; white-space: nowrap; }
.tr-note { position: relative; display: inline-flex; margin-left: 13px; }
.tr-note b { position: absolute; left: 12px; top: 10px; width: 24px; height: 24px; border-radius: 50%; background: #333a44; border: 1px solid #9aa0a8; font: 700 15px/22px "Liberation Sans", sans-serif; text-align: center; color: #fff; }
.tr-edge { position: absolute; right: 6px; top: 0; bottom: 0; width: 1px; background: #8a929c; }
```
